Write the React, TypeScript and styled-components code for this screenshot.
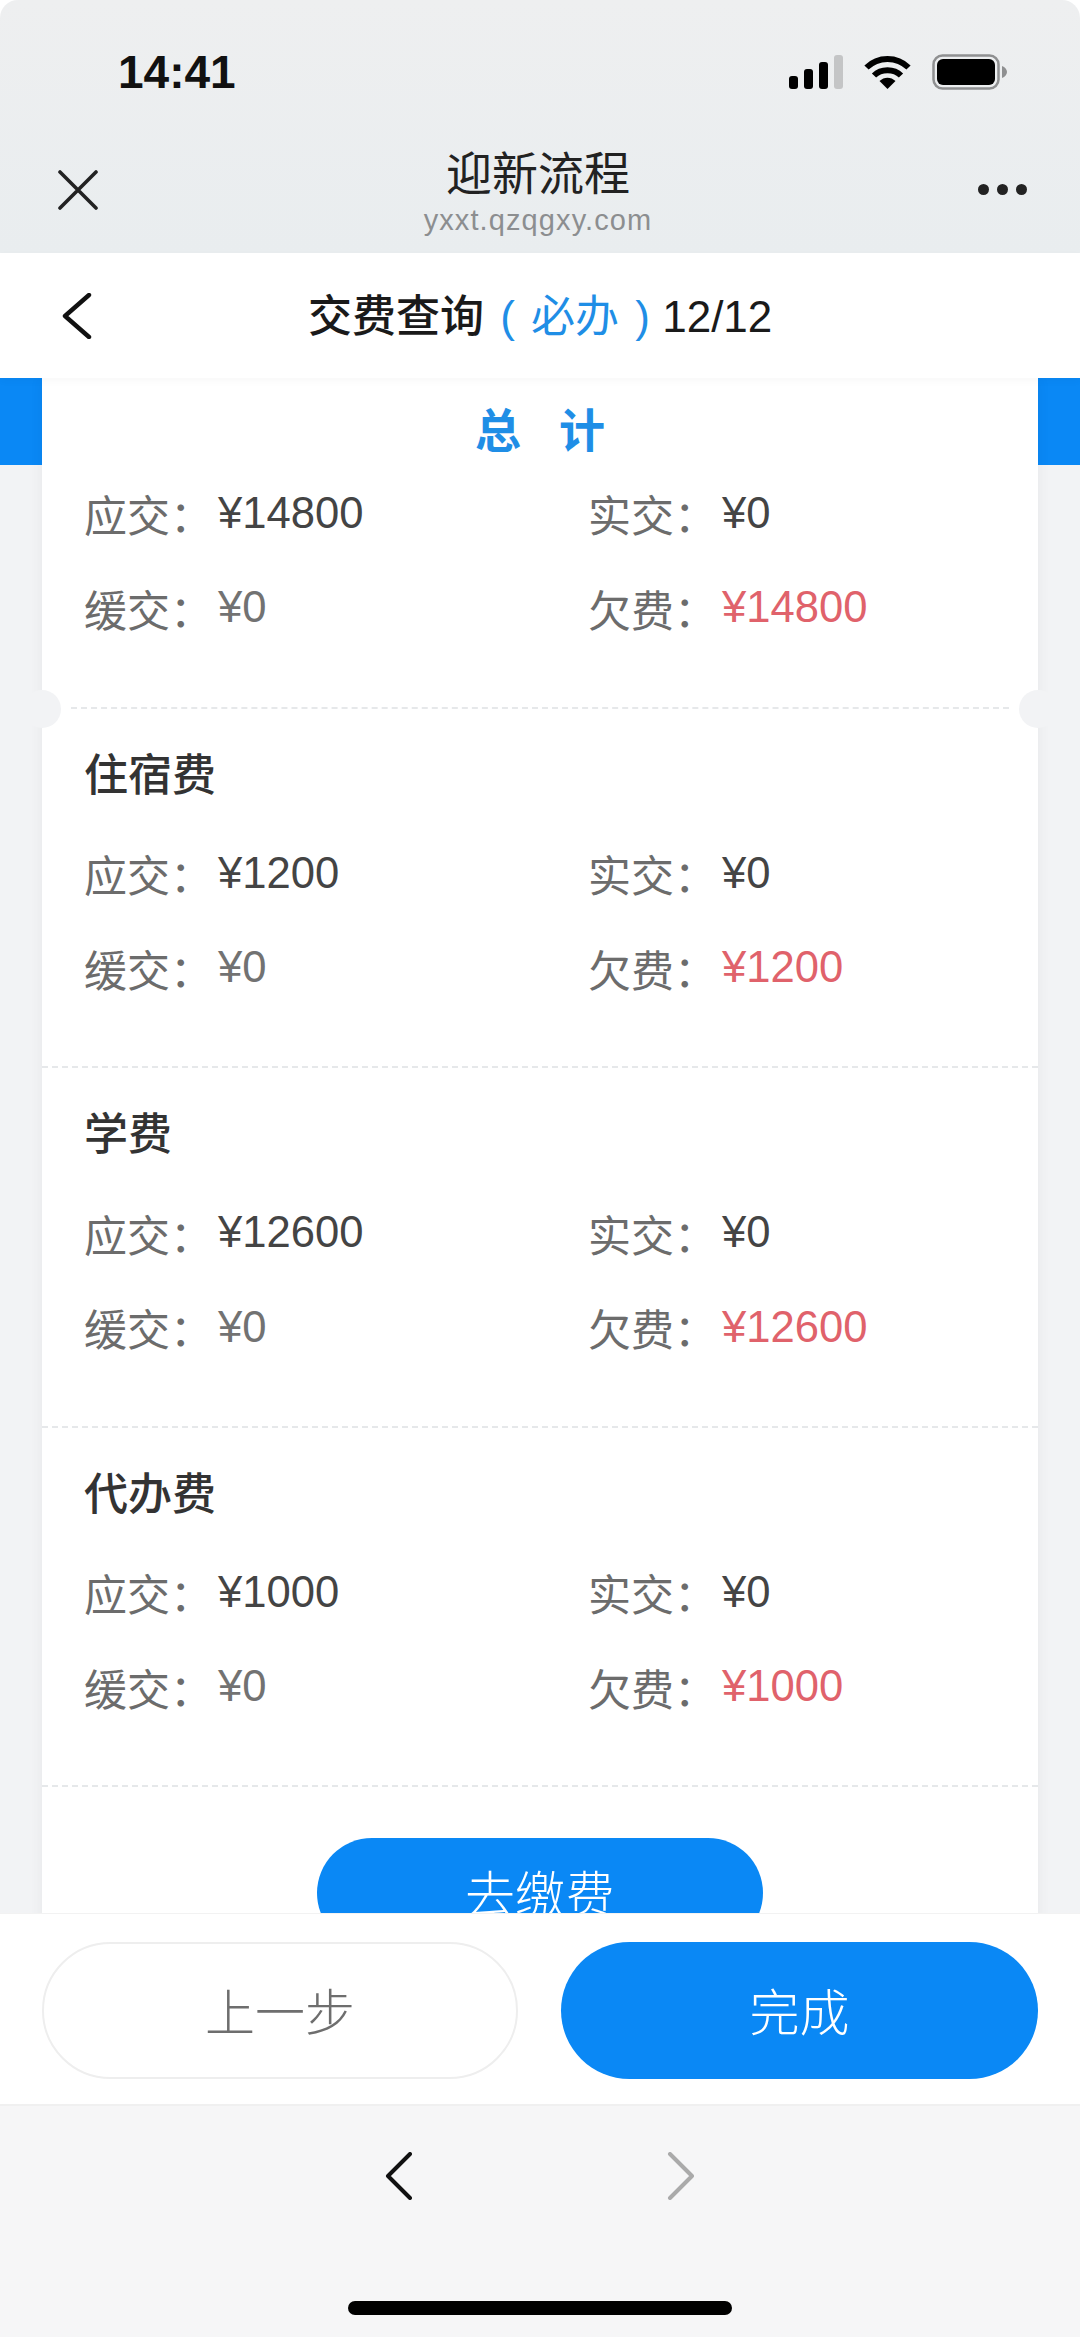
import React from 'react'
import styled, { createGlobalStyle } from 'styled-components'

const BLUE = '#0a88f5'
const TEXT_BLUE = '#1f8ee6'
const SANS = `"Liberation Sans", "Noto Sans CJK SC", sans-serif`

const fees = [
  { name: '住宿费', due: 1200 },
  { name: '学费', due: 12600 },
  { name: '代办费', due: 1000 },
]

const Global = createGlobalStyle`
  html, body { margin: 0; padding: 0; background: #fff; }
  * { box-sizing: border-box; }
`

const Screen = styled.div`
  width: 1080px;
  height: 2337px;
  display: flex;
  flex-direction: column;
  overflow: hidden;
  font-family: ${SANS};
  color: #333;
`

/* ---- browser chrome ---- */
const Chrome = styled.header`
  flex: none;
  height: 253px;
  padding: 0 53px 0 58px;
  display: flex;
  flex-direction: column;
  background: linear-gradient(#eeeff0, #e9edef);
  border-radius: 18px 18px 0 0;
`
const StatusBar = styled.div`
  height: 144px;
  padding: 0 0 0 60px;
  display: flex;
  align-items: center;
  justify-content: space-between;
`
const Clock = styled.span`
  font-size: 46px;
  font-weight: 700;
  color: #111;
`
const StatusIcons = styled.div`
  display: flex;
  align-items: center;
  gap: 21px;
  margin-right: 20px;
`
const ChromeRow = styled.div`
  display: flex;
  align-items: center;
  justify-content: space-between;
`
const ChromeTitle = styled.div`
  display: flex;
  flex-direction: column;
  align-items: center;
  margin-top: -1px;
`
const PageName = styled.div`
  font-size: 46px;
  line-height: 62px;
  color: #222;
`
const Host = styled.div`
  font-size: 29px;
  line-height: 30px;
  letter-spacing: 1.1px;
  color: #8c8e90;
`
const Dots = styled.div`
  display: flex;
  gap: 8px;
`
const Dot = styled.i`
  width: 11px;
  height: 11px;
  border-radius: 50%;
  background: #222;
`

/* ---- step bar ---- */
const StepBar = styled.nav`
  position: relative;
  flex: none;
  height: 125px;
  padding-left: 62px;
  display: flex;
  align-items: center;
  background: #fff;
  box-shadow: 0 3px 8px rgba(0, 0, 0, 0.03);
`
const StepTitle = styled.div`
  margin: -6px 0 0 216px;
  font-size: 44px;
  color: #1a1a1a;
  white-space: pre;
`
const StepName = styled.span`
  font-weight: 500;
`
const Required = styled.span`
  margin-right: -4px;
  color: ${TEXT_BLUE};
  word-spacing: 4px;
`

/* ---- scrolling body ---- */
const Body = styled.main`
  flex: 1;
  min-height: 0;
  padding: 0 42px;
  overflow: hidden;
  background: linear-gradient(${BLUE} 87px, #f2f3f5 87px);
`
const Card = styled.div`
  background: #fff;
  box-shadow: 0 0 14px rgba(0, 0, 0, 0.05);
`
const Total = styled.section`
  position: relative;
  height: 331px;
  padding-top: 25px;
`
const TotalTitle = styled.h2`
  margin: 0 0 7px;
  height: 56px;
  line-height: 56px;
  text-align: center;
  font-size: 46px;
  font-weight: 700;
  letter-spacing: 38px;
  text-indent: 38px;
  color: ${TEXT_BLUE};
`
const TearLine = styled.div`
  position: absolute;
  left: 29px;
  right: 29px;
  bottom: 0;
  border-bottom: 2px dashed #e6e8ea;
`
const Notch = styled.i<{ $side: 'left' | 'right' }>`
  position: absolute;
  bottom: -19px;
  ${p => p.$side}: -19px;
  width: 38px;
  height: 38px;
  border-radius: 50%;
  background: #f2f3f5;
`
const Fee = styled.section`
  height: 359.4px;
  padding-top: 36px;
  border-bottom: 2px dashed #e6e8ea;
`
const FeeName = styled.h3`
  margin: 0 0 19px;
  padding-left: 42px;
  height: 62px;
  line-height: 62px;
  font-size: 44px;
  font-weight: 500;
  color: #333;
`
const Amounts = styled.div`
  display: grid;
  grid-template-columns: 504px 1fr;
  grid-auto-rows: 94.5px;
  padding-left: 42px;
`
const Amount = styled.div`
  display: flex;
  align-items: center;
  font-size: 43px;
`
const Label = styled.span`
  width: 134px;
  color: #6c6c6c;
`
const Value = styled.span<{ $tone: 'dark' | 'muted' | 'red' }>`
  font-size: 43.6px;
  color: ${p => ({ dark: '#444', muted: '#727272', red: '#e0626b' }[p.$tone])};
`
const PayRow = styled.div`
  display: flex;
  justify-content: center;
  padding-top: 51px;
`
const Pill = styled.button<{ $ghost?: boolean }>`
  border: ${p => (p.$ghost ? '2px solid #eeeeee' : 'none')};
  border-radius: 999px;
  background: ${p => (p.$ghost ? '#fff' : BLUE)};
  color: ${p => (p.$ghost ? '#6e6e6e' : '#fff')};
  font-family: ${SANS};
  font-size: 50px;
  font-weight: 300;
  padding: 0 0 4px;
`
const PayButton = styled(Pill)`
  width: 446px;
  height: 110px;
`

/* ---- fixed footer ---- */
const Footer = styled.footer`
  position: relative;
  flex: none;
  height: 193px;
  padding: 28px 42px 0;
  display: grid;
  grid-template-columns: 476px 477px;
  grid-template-rows: 137px;
  justify-content: space-between;
  background: #fff;
  border-top: 1px solid #f2f2f2;
  border-bottom: 2px solid #f0f0f0;
`

/* ---- browser toolbar ---- */
const Toolbar = styled.div`
  flex: none;
  height: 231px;
  background: #f6f6f7;
  display: flex;
  flex-direction: column;
  align-items: center;
`
const ToolbarArrows = styled.div`
  margin-top: 46px;
  display: flex;
  gap: 254px;
`
const HomeBar = styled.div`
  width: 384px;
  height: 14px;
  margin-top: 101px;
  border-radius: 7px;
  background: #000;
`

const SignalIcon = () => (
  <svg width="54" height="34" viewBox="0 0 54 34">
    <rect x="0" y="21" width="9" height="13" rx="3" fill="#000" />
    <rect x="15" y="14" width="9" height="20" rx="3" fill="#000" />
    <rect x="30" y="7" width="9" height="27" rx="3" fill="#000" />
    <rect x="45" y="0" width="9" height="34" rx="3" fill="#c4c5c6" />
  </svg>
)

const WifiIcon = () => (
  <svg width="47" height="34" viewBox="0 0 47 34" fill="none" stroke="#000" strokeWidth="6">
    <path d="M2.5 12.5C14 1 33 1 44.5 12.5" />
    <path d="M10 20.5C17 13.5 30 13.5 37 20.5" />
    <path d="M23.5 34L15.5 26C20 21.5 27 21.5 31.5 26Z" fill="#000" stroke="none" />
  </svg>
)

const BatteryIcon = () => (
  <svg width="75" height="36" viewBox="0 0 75 36">
    <rect x="1.5" y="1.5" width="65" height="33" rx="9" fill="none" stroke="#8f9091" strokeWidth="2.5" />
    <rect x="5" y="5" width="58" height="26" rx="6" fill="#000" />
    <path d="M70 12C73 13 75 15.5 75 18C75 20.5 73 23 70 24Z" fill="#8f9091" />
  </svg>
)

const CloseIcon = () => (
  <svg width="40" height="40" viewBox="0 0 40 40" stroke="#222" strokeWidth="3.6" strokeLinecap="round">
    <path d="M2 2L38 38M38 2L2 38" />
  </svg>
)

const Chevron = ({ dir, w, h, color, stroke }: { dir: 'left' | 'right'; w: number; h: number; color: string; stroke: number }) => (
  <svg width={w} height={h} viewBox={`0 0 ${w} ${h}`} fill="none" stroke={color} strokeWidth={stroke} strokeLinecap="round" strokeLinejoin="round">
    {dir === 'left'
      ? <path d={`M${w - 3} 2L3 ${h / 2}L${w - 3} ${h - 2}`} />
      : <path d={`M3 2L${w - 3} ${h / 2}L3 ${h - 2}`} />}
  </svg>
)

const AmountGrid = ({ due }: { due: number }) => (
  <Amounts>
    <Amount><Label>应交：</Label><Value $tone="dark">¥{due}</Value></Amount>
    <Amount><Label>实交：</Label><Value $tone="dark">¥0</Value></Amount>
    <Amount><Label>缓交：</Label><Value $tone="muted">¥0</Value></Amount>
    <Amount><Label>欠费：</Label><Value $tone="red">¥{due}</Value></Amount>
  </Amounts>
)

export default function App() {
  return (
    <Screen>
      <Global />
      <Chrome>
        <StatusBar>
          <Clock>14:41</Clock>
          <StatusIcons>
            <SignalIcon />
            <WifiIcon />
            <BatteryIcon />
          </StatusIcons>
        </StatusBar>
        <ChromeRow>
          <CloseIcon />
          <ChromeTitle>
            <PageName>迎新流程</PageName>
            <Host>yxxt.qzqgxy.com</Host>
          </ChromeTitle>
          <Dots><Dot /><Dot /><Dot /></Dots>
        </ChromeRow>
      </Chrome>

      <StepBar>
        <Chevron dir="left" w={30} h={46} color="#111" stroke={4.4} />
        <StepTitle><StepName>交费查询</StepName><Required> ( 必办 ) </Required>12/12</StepTitle>
      </StepBar>

      <Body>
        <Card>
          <Total>
            <TotalTitle>总计</TotalTitle>
            <AmountGrid due={14800} />
            <TearLine />
            <Notch $side="left" />
            <Notch $side="right" />
          </Total>
          {fees.map(fee => (
            <Fee key={fee.name}>
              <FeeName>{fee.name}</FeeName>
              <AmountGrid due={fee.due} />
            </Fee>
          ))}
          <PayRow>
            <PayButton>去缴费</PayButton>
          </PayRow>
        </Card>
      </Body>

      <Footer>
        <Pill $ghost>上一步</Pill>
        <Pill>完成</Pill>
      </Footer>

      <Toolbar>
        <ToolbarArrows>
          <Chevron dir="left" w={28} h={48} color="#111" stroke={4} />
          <Chevron dir="right" w={28} h={48} color="#aaa" stroke={4} />
        </ToolbarArrows>
        <HomeBar />
      </Toolbar>
    </Screen>
  )
}
